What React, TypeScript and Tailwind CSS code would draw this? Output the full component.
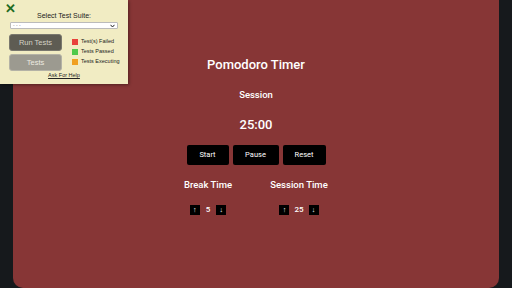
import React from "react";

export default function App() {
  return (
    <div className="relative w-[512px] h-[288px] overflow-hidden bg-[#16191c]">
      <div className="absolute left-[13px] top-[-10px] w-[486px] h-[298px] rounded-[10px] bg-[#873636]" />
      <div
        className="relative flex flex-col items-center pt-[55px] text-white"
        style={{ fontFamily: "Roboto, 'Noto Sans', sans-serif" }}
      >
        <h1 className="text-[13px] leading-[20px] font-medium">Pomodoro Timer</h1>
        <div className="mt-[13px] text-[9.5px] leading-[14px] font-medium">Session</div>
        <div className="mt-[13px] text-[13px] leading-[20px] font-medium">25:00</div>
        <div className="mt-[10px] flex gap-[4px]">
          <button className="h-[20px] w-[42px] rounded-[2px] bg-black text-[7.5px] text-white">Start</button>
          <button className="h-[20px] w-[46px] rounded-[2px] bg-black text-[7.5px] text-white">Pause</button>
          <button className="h-[20px] w-[43px] rounded-[2px] bg-black text-[7.5px] text-white">Reset</button>
        </div>
        <div className="mt-[13px] flex gap-[26px]">
          <div className="w-[60px] flex flex-col items-center">
            <div className="text-[9.5px] leading-[14px] font-medium whitespace-nowrap">Break Time</div>
            <div className="mt-[13px] flex items-center gap-[6px] h-[10px]">
              <button className="w-[10px] h-[10px] bg-black text-[7px] leading-[10px] text-white">↑</button>
              <span className="text-[8px] leading-[10px] font-medium">5</span>
              <button className="w-[10px] h-[10px] bg-black text-[7px] leading-[10px] text-white">↓</button>
            </div>
          </div>
          <div className="w-[70px] flex flex-col items-center">
            <div className="text-[9.5px] leading-[14px] font-medium whitespace-nowrap">Session Time</div>
            <div className="mt-[13px] flex items-center gap-[5px] h-[10px]">
              <button className="w-[10px] h-[10px] bg-black text-[7px] leading-[10px] text-white">↑</button>
              <span className="text-[8px] leading-[10px] font-medium">25</span>
              <button className="w-[10px] h-[10px] bg-black text-[7px] leading-[10px] text-white">↓</button>
            </div>
          </div>
        </div>
      </div>

      <div
        className="absolute left-0 top-0 w-[128px] h-[84px] bg-[#f1ecc3] shadow-[1px_1px_3px_rgba(0,0,0,0.4)]"
        style={{ fontFamily: "'Liberation Sans', Arial, sans-serif" }}
      >
        <div className="absolute left-[5px] top-[2px] text-[13px] leading-[13px] font-bold text-[#1f6b1f]">✕</div>
        <div className="pt-[11px] text-center text-[7px] leading-[9px] text-[#222]">Select Test Suite:</div>
        <div className="mx-[10px] mt-[2px] h-[7px] rounded-[1px] border border-[#bbb] bg-white flex items-center justify-between px-[2px]">
          <span className="text-[5px] leading-[5px] text-[#888]">- - -</span>
          <svg width="5" height="4" viewBox="0 0 5 4"><path d="M0.5 0.8 L2.5 3 L4.5 0.8" stroke="#222" strokeWidth="1" fill="none" /></svg>
        </div>
        <div className="flex mt-[5px] pl-[9px]">
          <div className="flex flex-col gap-[3px]">
            <div className="w-[53px] h-[17px] rounded-[3px] bg-[#5e5c53] border border-[#7a786e] flex items-center justify-center text-[7.5px] text-[#d4d2c4]">Run Tests</div>
            <div className="w-[53px] h-[17px] rounded-[3px] bg-[#9c9a90] border border-[#b4b2a6] flex items-center justify-center text-[7.5px] text-[#eceae0]">Tests</div>
          </div>
          <div className="ml-[10px] mt-[4px] flex flex-col gap-[3px] text-[5.5px] text-[#222]">
            <div className="flex items-center gap-[3px] h-[7px]">
              <span className="w-[6px] h-[6px] bg-[#e8413a]" />Test(s) Failed
            </div>
            <div className="flex items-center gap-[3px] h-[7px]">
              <span className="w-[6px] h-[6px] bg-[#4fc94a]" />Tests Passed
            </div>
            <div className="flex items-center gap-[3px] h-[7px]">
              <span className="w-[6px] h-[6px] bg-[#f0a020]" />Tests Executing
            </div>
          </div>
        </div>
        <div className="mt-[1px] text-center text-[5.5px] leading-[7px] underline text-[#222]">Ask For Help</div>
      </div>
    </div>
  );
}
